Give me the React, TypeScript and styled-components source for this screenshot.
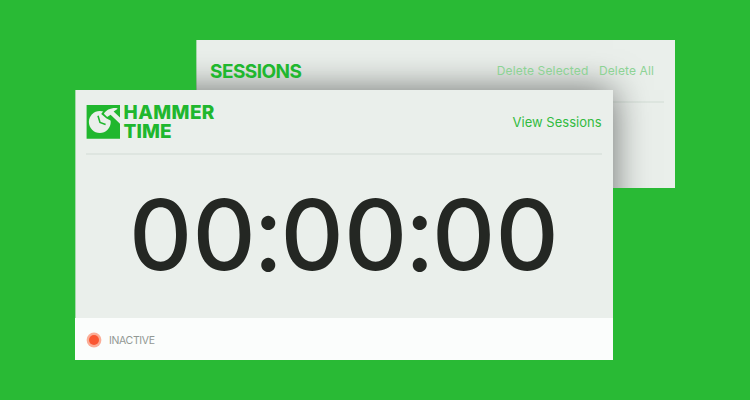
import React from "react";
import styled, { createGlobalStyle } from "styled-components";

const GlobalStyle = createGlobalStyle`
  * { box-sizing: border-box; }
  body { margin: 0; background: #29ba35; font-family: Inter, "Open Sans", sans-serif; }
`;

const Stage = styled.main`
  position: relative;
  width: 750px;
  height: 400px;
  overflow: hidden;
  background: #29ba35;
`;

const Window = styled.section`
  position: absolute;
  display: flex;
  flex-direction: column;
  background: #eaefeb;
  overflow: hidden;
`;

const SessionsWindow = styled(Window)`
  left: 196px;
  top: 40px;
  width: 479px;
  height: 148px;
  padding: 0 11px 0 14px;
  box-shadow: inset 1px 0 #a5d9aa;

  /* shade cast by the timer window, kept inside this panel */
  &::before {
    content: "";
    position: absolute;
    left: -120px;
    top: 50px;
    width: 537px;
    height: 270px;
    box-shadow: 0 0 34px rgba(0, 0, 0, 0.54);
  }
`;

const TimerWindow = styled(Window)`
  left: 75px;
  top: 90px;
  width: 538px;
  height: 270px;
  box-shadow: inset 1px 0 #a5d9aa;
`;

const Header = styled.header<{ $height: number }>`
  position: relative;
  display: flex;
  align-items: center;
  justify-content: space-between;
  height: ${(p) => p.$height}px;
  flex: none;
  border-bottom: 2px solid rgba(40, 80, 50, 0.06);
`;

const TimerHeader = styled(Header)`
  margin: 0 11.5px 0 11px;
`;

const Title = styled.h2`
  margin: 0;
  padding-top: 2px;
  font-size: 19px;
  font-weight: 650;
  line-height: 24px;
  letter-spacing: -0.55px;
  color: #20b72e;
`;

const Actions = styled.nav`
  display: flex;
  gap: 10.5px;
  padding-right: 10px;
`;

const TextButton = styled.button<{ $muted?: boolean; $size: number; $spacing: number }>`
  border: 0;
  padding: 0;
  background: none;
  font: 400 ${(p) => p.$size}px/20px Inter, sans-serif;
  letter-spacing: ${(p) => p.$spacing}px;
  color: ${(p) => (p.$muted ? "#8dd395" : "#32bb3f")};
  white-space: nowrap;
`;

const Brand = styled.div`
  display: flex;
  align-items: center;
  gap: 3.6px;
`;

const BrandName = styled.h1`
  margin: 0;
  font-size: 19px;
  font-weight: 850;
  line-height: 19px;
  color: #20b72e;
`;

const BrandLine = styled.span<{ $spacing: number }>`
  display: block;
  letter-spacing: ${(p) => p.$spacing}px;
`;

const Clock = styled.div`
  display: flex;
  flex: 1;
  justify-content: center;
  align-items: center;
  padding: 0 0 4px 0;
  color: #242723;
  font-size: 98px;
  font-weight: 530;
  line-height: 120px;
`;

const Digit = styled.span`
  width: 63.5px;
  text-align: center;
`;

const Colon = styled.span`
  width: 24.5px;
  display: flex;
  justify-content: center;
  padding-bottom: 14px;
  font-family: Lato, sans-serif;
  font-size: 112px;
  font-weight: 400;
`;

const StatusBar = styled.footer`
  display: flex;
  align-items: center;
  gap: 10px;
  height: 42px;
  padding: 2px 11px 0 14px;
  background: #fbfdfc;
`;

const StatusDot = styled.i`
  width: 10px;
  height: 10px;
  border-radius: 50%;
  background: #fa5632;
  box-shadow: 0 0 0 2.4px #fbad97;
`;

const StatusText = styled.span`
  padding-top: 1px;
  font-size: 10.5px;
  line-height: 16px;
  letter-spacing: -0.35px;
  color: #929894;
`;

const Logo = () => (
  <svg width="34" height="34" viewBox="-0.6 0 34 34" aria-hidden="true">
    <path fill="#20b72e" d="M0 0H33.4V33.7H0Z" />
    <circle cx="13.2" cy="17" r="10.9" fill="#eaefeb" />
    <path d="M14.6 9L18 4.5L33.4 19.5V22L26 16.5L20 13.6Z" fill="#20b72e" />
    <path
      d="M17.3 8.8C19.2 5 23.6 2.7 29.8 2.9L31.2 3.7L27 6.4L34 13.2V19.4L24 9.8L20.6 11.9Z"
      fill="#eaefeb"
    />
    <path d="M11.4 10.8L13.4 17.4L19 19.4" fill="none" stroke="#20b72e" strokeWidth="1.6" />
  </svg>
);

export default function App() {
  return (
    <>
      <GlobalStyle />
      <Stage>
        <SessionsWindow>
          <Header $height={63}>
            <Title>SESSIONS</Title>
            <Actions>
              <TextButton $muted $size={12} $spacing={0.16}>Delete Selected</TextButton>
              <TextButton $muted $size={12} $spacing={0.12}>Delete All</TextButton>
            </Actions>
          </Header>
        </SessionsWindow>
        <TimerWindow>
          <TimerHeader $height={65}>
            <Brand>
              <Logo />
              <BrandName>
                <BrandLine $spacing={0.4}>HAMMER</BrandLine>
                <BrandLine $spacing={0.1}>TIME</BrandLine>
              </BrandName>
            </Brand>
            <TextButton $size={13} $spacing={0}>View Sessions</TextButton>
          </TimerHeader>
          <Clock>
            {"00:00:00".split("").map((c, i) =>
              c === ":" ? <Colon key={i}>{c}</Colon> : <Digit key={i}>{c}</Digit>
            )}
          </Clock>
          <StatusBar>
            <StatusDot />
            <StatusText>INACTIVE</StatusText>
          </StatusBar>
        </TimerWindow>
      </Stage>
    </>
  );
}
